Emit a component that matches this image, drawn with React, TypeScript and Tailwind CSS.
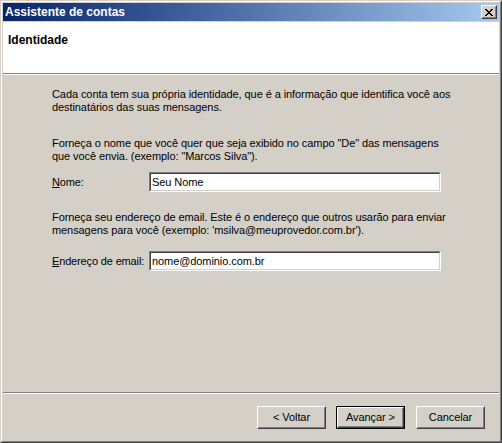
import React from 'react';

// Classic Windows raised / sunken edges
const raised =
  'border border-t-white border-l-white border-r-[#404040] border-b-[#404040]';
const raisedInner =
  'border border-t-[#d4d0c8] border-l-[#d4d0c8] border-r-[#808080] border-b-[#808080]';

const WizButton = ({ label, isDefault }: { label: React.ReactNode; isDefault?: boolean }) => {
  const face = (
    <div className={`${raised} w-full h-full`}>
      <div className={`${raisedInner} w-full h-full flex items-center justify-center bg-[#d4d0c8]`}>
        <span className="text-[11px] leading-[13px] tracking-[-0.08px] text-black">{label}</span>
      </div>
    </div>
  );
  return (
    <button className={`w-[69px] h-[23px] p-0 bg-[#d4d0c8] ${isDefault ? 'border border-black' : ''}`}>
      {face}
    </button>
  );
};

const Field = ({ label, value }: { label: React.ReactNode; value: string }) => (
  <div className="flex items-center h-[20px]">
    <label className="w-[97px] text-[11px] leading-[13px] tracking-[-0.15px] text-black">{label}</label>
    <div className="w-[292px] h-[20px] border border-t-[#808080] border-l-[#808080] border-r-white border-b-white">
      <div className="w-full h-full border border-t-[#404040] border-l-[#404040] border-r-[#d4d0c8] border-b-[#d4d0c8] bg-white flex items-center pl-[1px]">
        <span className="text-[11px] leading-[13px] text-black">{value}</span>
      </div>
    </div>
  </div>
);

export default function App() {
  return (
    <div className="w-[502px] h-[443px] font-['Liberation_Sans',Arial,sans-serif] bg-[#d4d0c8] border border-t-[#d4d0c8] border-l-[#d4d0c8] border-r-[#404040] border-b-[#404040]">
      <div className="h-full border border-t-white border-l-white border-r-[#808080] border-b-[#808080] p-px flex flex-col">
        {/* Title bar */}
        <div className="h-[18px] flex items-center justify-between bg-gradient-to-r from-[#0a246a] to-[#a6caf0] pl-[2px] pr-[2px]">
          <span className="text-white font-bold text-[12px] leading-[13px]">Assistente de contas</span>
          <div className={`w-[16px] h-[14px] ${raised}`}>
            <div className={`${raisedInner} w-full h-full bg-[#d4d0c8] flex items-center justify-center`}>
              <svg width="8" height="7" viewBox="0 0 8 7" shapeRendering="crispEdges">
                <path
                  d="M0 0h2v1H0zM6 0h2v1H6zM1 1h2v1H1zM5 1h2v1H5zM2 2h4v1H2zM3 3h2v1H3zM2 4h4v1H2zM1 5h2v1H1zM5 5h2v1H5zM0 6h2v1H0zM6 6h2v1H6z"
                  fill="#000"
                />
              </svg>
            </div>
          </div>
        </div>
        <div className="h-px" />

        {/* Header */}
        <div className="h-[51px] bg-white pl-[5px] pt-[12px] font-bold text-[12px] leading-[13px] text-black">
          Identidade
        </div>
        <div className="h-px bg-[#808080]" />
        <div className="h-px bg-white" />

        {/* Body */}
        <div className="flex-1 pl-[49px] pt-[13px] text-[11px] leading-[13px] tracking-[-0.08px] text-black">
          <p className="whitespace-nowrap">
            Cada conta tem sua própria identidade, que é a informação que identifica você aos
            <br />
            destinatários das suas mensagens.
          </p>
          <p className="whitespace-nowrap mt-[23px]">
            Forneça o nome que você quer que seja exibido no campo "De" das mensagens
            <br />
            que você envia. (exemplo: "Marcos Silva").
          </p>
          <div className="mt-[9px]">
            <Field
              label={
                <>
                  <span className="underline">N</span>ome:
                </>
              }
              value="Seu Nome"
            />
          </div>
          <p className="whitespace-nowrap mt-[19px]">
            Forneça seu endereço de email. Este é o endereço que outros usarão para enviar
            <br />
            mensagens para você (exemplo: 'msilva@meuprovedor.com.br').
          </p>
          <div className="mt-[14px]">
            <Field
              label={
                <>
                  <span className="underline">E</span>ndereço de email:
                </>
              }
              value="nome@dominio.com.br"
            />
          </div>
        </div>

        <div className="h-px bg-[#808080]" />
        <div className="h-px bg-white" />

        {/* Buttons */}
        <div className="h-[46px] flex items-center justify-end pr-[14px]">
          <WizButton label="< Voltar" />
          <div className="w-[10px]" />
          <WizButton label="Avançar >" isDefault />
          <div className="w-[11px]" />
          <WizButton label="Cancelar" />
        </div>
      </div>
    </div>
  );
}
